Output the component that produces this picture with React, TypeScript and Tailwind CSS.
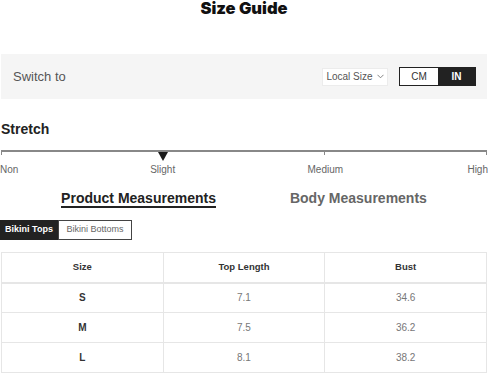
import React from "react";

const rows = [
  { size: "S", length: "7.1", bust: "34.6" },
  { size: "M", length: "7.5", bust: "36.2" },
  { size: "L", length: "8.1", bust: "38.2" },
];

const App = () => {
  return (
    <div className="w-[488px] h-[373px] overflow-hidden bg-white text-[#222] font-[family-name:Liberation_Sans,Arial,sans-serif]">
      {/* Title */}
      <h1 className="text-center text-[16.5px] leading-[16px] font-black font-[family-name:Inter,sans-serif] text-[#111]">
        Size Guide
      </h1>

      {/* Unit switch bar */}
      <div className="mt-[38px] mx-px h-[45px] bg-[#f5f5f5] flex items-center pl-[12px] pr-[11px]">
        <span className="text-[13px] text-[#555]">Switch to</span>
        <div className="ml-auto flex items-center">
          <div className="h-[18px] w-[66px] bg-white border border-[#ececec] flex items-center justify-center gap-[4px] text-[10px] text-[#555]">
            <span>Local Size</span>
            <svg width="7" height="5" viewBox="0 0 7 5" fill="none">
              <path d="M0.5 0.8 L3.5 3.8 L6.5 0.8" stroke="#777" strokeWidth="0.9" />
            </svg>
          </div>
          <div className="ml-[11px] flex h-[19px] border border-[#222] text-[10px]">
            <div className="w-[38px] bg-white text-[#333] flex items-center justify-center">CM</div>
            <div className="w-[37px] bg-[#222] text-white font-bold flex items-center justify-center">IN</div>
          </div>
        </div>
      </div>

      {/* Stretch */}
      <h2 className="mt-[22px] ml-px text-[14px] leading-[16px] font-bold text-[#222]">Stretch</h2>
      <div className="mt-[13px] mx-px grid grid-cols-3 h-[5px]">
        <div className="border-t-2 border-l border-r border-[#888]" />
        <div className="relative border-t-2 border-r border-[#888]">
          <svg className="absolute -left-[5px] top-0" width="10" height="9" viewBox="0 0 10 9">
            <path d="M0 0 H10 L5 9 Z" fill="#1a1a1a" />
          </svg>
        </div>
        <div className="border-t-2 border-r border-[#888]" />
      </div>
      <div className="mt-[9px] grid grid-cols-[1fr_2fr_2fr_1fr] text-[10px] leading-[12px] text-[#666]">
        <span className="text-left">Non</span>
        <span className="text-center">Slight</span>
        <span className="text-center">Medium</span>
        <span className="text-right">High</span>
      </div>

      {/* Measurement tabs */}
      <div className="mt-[14px] flex justify-center gap-[74px] text-[14px] leading-[16px] font-bold">
        <span className="text-[#222] border-b-2 border-[#222]">Product Measurements</span>
        <span className="text-[#666]">Body Measurements</span>
      </div>

      {/* Category tabs */}
      <div className="mt-[12px] flex h-[20px] text-[9px]">
        <div className="w-[58px] bg-[#222] text-white font-bold flex items-center justify-center">Bikini Tops</div>
        <div className="w-[74px] border border-[#444] text-[#666] flex items-center justify-center">Bikini Bottoms</div>
      </div>

      {/* Size table */}
      <table className="mt-[12px] ml-px w-[486px] border-collapse table-fixed">
        <thead>
          <tr className="h-[30px]">
            <th className="border border-[#e6e6e6] border-b-2 text-[9.5px] font-bold text-[#333]">Size</th>
            <th className="border border-[#e6e6e6] border-b-2 text-[9.5px] font-bold text-[#333]">Top Length</th>
            <th className="border border-[#e6e6e6] border-b-2 text-[9.5px] font-bold text-[#333]">Bust</th>
          </tr>
        </thead>
        <tbody>
          {rows.map((row) => (
            <tr key={row.size} className="h-[30px]">
              <td className="border border-[#e6e6e6] text-center text-[10px] font-bold text-[#333]">{row.size}</td>
              <td className="border border-[#e6e6e6] text-center text-[10px] text-[#777]">{row.length}</td>
              <td className="border border-[#e6e6e6] text-center text-[10px] text-[#777]">{row.bust}</td>
            </tr>
          ))}
        </tbody>
      </table>
    </div>
  );
};

export default App;
